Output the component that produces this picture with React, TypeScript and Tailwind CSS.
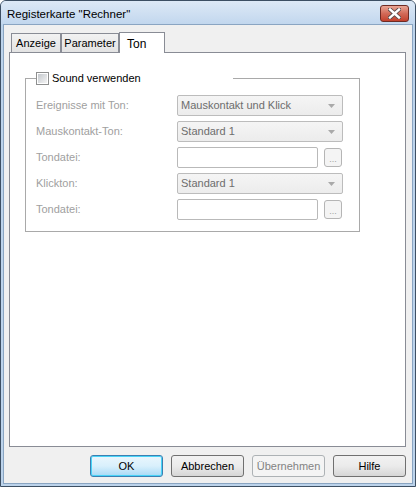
const rows = [
  { label: 'Ereignisse mit Ton:', kind: 'combo', value: 'Mauskontakt und Klick' },
  { label: 'Mauskontakt-Ton:', kind: 'combo', value: 'Standard 1' },
  { label: 'Tondatei:', kind: 'file', value: '' },
  { label: 'Klickton:', kind: 'combo', value: 'Standard 1' },
  { label: 'Tondatei:', kind: 'file', value: '' },
];

function Combo({ value }: { value: string }) {
  return (
    <div className="w-[166px] h-[21px] flex items-center justify-between pl-[3px] pr-[7px] rounded-[2px] border border-[#bcbcbc] bg-gradient-to-b from-[#f5f5f5] to-[#ececec] text-[#6d6d6d]">
      <span>{value}</span>
      <svg width="7" height="4" viewBox="0 0 7 4">
        <path d="M0 0 H7 L3.5 4 Z" fill="#a9a9a9" />
      </svg>
    </div>
  );
}

function FileInput() {
  return (
    <div className="flex items-start">
      <div className="w-[141px] h-[21px] rounded-[2px] border border-[#b9b9b9] bg-white" />
      <div className="ml-[6px] mt-px w-[18px] h-[19px] flex items-end justify-center pb-[2px] rounded-[3px] border border-[#b5b5b5] bg-[#f4f4f4] text-[9px] leading-none text-[#a0a0a0]">
        ...
      </div>
    </div>
  );
}

function Tab({ label, active }: { label: string; active?: boolean }) {
  if (active) {
    return (
      <div className="relative z-10 -mb-px h-[21px] w-[46px] pl-[7px] pt-[2px] border border-b-0 border-[#898c95] bg-white text-[12px]">
        {label}
      </div>
    );
  }
  return (
    <div className="h-[19px] flex items-center justify-center border border-b-0 border-[#898c95] bg-gradient-to-b from-[#f2f2f2] to-[#e3e3e3]">
      {label}
    </div>
  );
}

function DlgButton({
  label,
  variant = 'normal',
}: {
  label: string;
  variant?: 'normal' | 'default' | 'disabled';
}) {
  const styles = {
    normal:
      'border-[#707070] bg-gradient-to-b from-[#f2f2f2] via-[#ebebeb] to-[#d6d6d6] text-black',
    default:
      'border-[#3c7fb1] shadow-[inset_0_0_0_1px_#48d4f8] bg-gradient-to-b from-[#eaf6fd] via-[#d9f0fc] to-[#a7d9f5] text-black',
    disabled: 'border-[#adb2b5] bg-[#f4f4f4] text-[#838383]',
  };
  return (
    <div
      className={`w-[73px] h-[22px] flex items-center justify-center rounded-[3px] border ${styles[variant]}`}
    >
      {label}
    </div>
  );
}

export default function App() {
  return (
    <div className="w-[416px] h-[487px] font-['Liberation_Sans',Arial,sans-serif] text-[11px] text-black">
      <div className="w-full h-full flex flex-col rounded-t-[6px] border border-[#3d4f63] bg-[#bcd3eb]">
        {/* title bar */}
        <div className="h-[23px] flex items-start justify-between pl-[6px] pr-[6px] rounded-t-[5px] bg-gradient-to-b from-[#dde9f6] to-[#c2d7ee]">
          <span className="mt-[5px] text-[11.5px] text-black">Registerkarte "Rechner"</span>
          <div className="mt-[4px] w-[29px] h-[17px] flex items-center justify-center rounded-[3px] border border-[#6e2b24] bg-gradient-to-b from-[#e8a596] via-[#d26a58] to-[#c3402c]">
            <svg width="13" height="11" viewBox="0 0 13 11">
              <path d="M2 1.5 L11 9.5 M11 1.5 L2 9.5" stroke="#5a4a4a" strokeWidth="4.2" strokeLinecap="square" />
              <path d="M2 1.5 L11 9.5 M11 1.5 L2 9.5" stroke="#ffffff" strokeWidth="2.4" strokeLinecap="square" />
            </svg>
          </div>
        </div>

        {/* client area */}
        <div className="flex-1 mx-[2px] mb-[2px] border border-[#8aa5c2] bg-[#f0f0f0] flex flex-col">
          <div className="ml-[7px] mt-[7px] flex items-end">
            <div className="w-[50px]">
              <Tab label="Anzeige" />
            </div>
            <div className="w-[58px]">
              <Tab label="Parameter" />
            </div>
            <Tab label="Ton" active />
          </div>

          <div className="ml-[5px] w-[397px] h-[395px] border border-[#898c95] bg-white">
            <fieldset className="ml-[15px] mt-[19px] w-[335px] px-[10px] pb-[11px] border border-[#a9a9a9]">
              <legend className="w-[197px] h-[13px] flex items-center">
                <div className="w-[13px] h-[13px] flex items-center justify-center border border-[#8e8f8f] bg-white">
                  <div className="w-[9px] h-[9px] bg-gradient-to-br from-[#c4c8cd] to-[#f4f4f4]" />
                </div>
                <span className="ml-[3px] text-black">Sound verwenden</span>
              </legend>
              <div className="mt-[10px] flex flex-col gap-[5px]">
                {rows.map((r, i) => (
                  <div key={i} className="flex items-center">
                    <span className="w-[141px] text-[#a0a0a0]">{r.label}</span>
                    {r.kind === 'combo' ? <Combo value={r.value} /> : <FileInput />}
                  </div>
                ))}
              </div>
            </fieldset>
          </div>

          <div className="mt-[8px] pr-[6px] flex justify-end gap-[8px]">
            <DlgButton label="OK" variant="default" />
            <DlgButton label="Abbrechen" />
            <DlgButton label="Übernehmen" variant="disabled" />
            <DlgButton label="Hilfe" />
          </div>
        </div>
      </div>
    </div>
  );
}
